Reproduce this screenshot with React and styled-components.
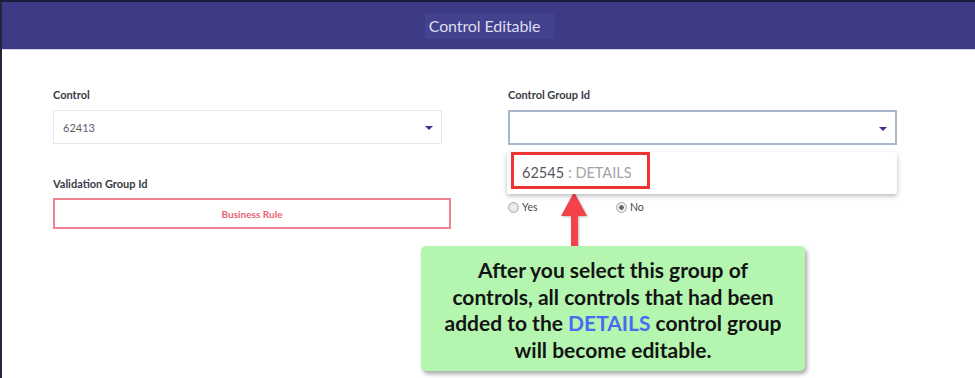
import React from 'react';
import styled, { createGlobalStyle } from 'styled-components';

const GlobalStyle = createGlobalStyle`
  html, body {
    margin: 0;
    padding: 0;
    background: #fff;
  }
  body {
    font-family: Lato, "Open Sans", sans-serif;
  }
`;

// Styles
const Frame = styled.div`
  position: relative;
  width: 975px;
  height: 378px;
  box-sizing: border-box;
  border-left: 2px solid #26263a;
  border-top: 2px solid #1c1b3b;
  overflow: hidden;
  background: #fff;
`;

const Header = styled.header`
  height: 47px;
  background: #3d3b86;
  border-bottom: 1px solid #d4d6e2;
  display: flex;
  align-items: center;
  justify-content: center;
`;

const Title = styled.h1`
  margin: 0 0 0 2px;
  padding: 3px 14px 4px 4px;
  background: #43428f;
  color: #dedced;
  font-family: Lato, sans-serif;
  font-size: 16px;
  font-weight: 400;
  letter-spacing: -0.1px;
`;

const Form = styled.div`
  display: grid;
  grid-template-columns: 398px 389px;
  column-gap: 57px;
  padding: 38px 0 0 51px;
`;

const Column = styled.div`
  display: flex;
  flex-direction: column;
  position: relative;
`;

const Label = styled.label`
  font-size: 11px;
  font-weight: 700;
  color: #3a3a44;
  margin-top: ${(props) => props.top || 0}px;
  margin-bottom: ${(props) => props.gap || 9}px;
  line-height: 13px;
`;

const Select = styled.div`
  width: ${(props) => props.width || '100%'};
  height: ${(props) => (props.focused ? 35 : 34)}px;
  box-sizing: border-box;
  border: ${(props) => (props.focused ? '2px solid #a9b7cc' : '1px solid #e6e6ef')};
  display: flex;
  align-items: center;
  justify-content: space-between;
  padding: 0 8px 0 9px;
  font-size: 11px;
  color: #5c5c66;
`;

const Caret = styled.span`
  width: 0;
  height: 0;
  border-left: 4px solid transparent;
  border-right: 4px solid transparent;
  border-top: 4px solid #4a2a8c;
  margin-top: 2px;
`;

const RuleBox = styled.div`
  height: 31px;
  box-sizing: border-box;
  border: 2px solid #f0828f;
  display: flex;
  align-items: center;
  justify-content: center;
  color: #ea5f74;
  font-size: 10px;
  font-weight: 700;
`;

const Menu = styled.div`
  position: absolute;
  top: 64px;
  left: -1px;
  width: 390px;
  height: 42px;
  background: #fff;
  box-shadow: 0 2px 5px rgba(0, 0, 0, 0.28);
  border-radius: 2px;
  z-index: 2;
`;

const Highlight = styled.div`
  position: absolute;
  top: 0;
  left: 4px;
  width: 139px;
  height: 37px;
  box-sizing: border-box;
  border: 3px solid #ee3333;
  display: flex;
  align-items: center;
  padding-left: 8px;
  padding-top: 4px;
  font-size: 14.5px;
  color: #55555c;
`;

const Muted = styled.span`
  color: #a3a3aa;
  margin-left: 4px;
`;

const RadioRow = styled.div`
  display: flex;
  margin-top: 56px;
  font-size: 10.5px;
  color: #4a4a52;
`;

const Radio = styled.span`
  display: flex;
  align-items: center;
  gap: 3px;
  width: ${(props) => props.width}px;
`;

const Dot = styled.span`
  width: 9px;
  height: 9px;
  border-radius: 50%;
  border: 1px solid #a8a8a8;
  background: radial-gradient(circle, ${(props) => (props.checked ? '#666 0 2px, #eee 2.5px' : '#f2f2f2 0, #e4e4e4 4px')});
`;

const Arrow = styled.svg`
  position: absolute;
  left: 556px;
  top: 188px;
  filter: drop-shadow(1px 1px 1px rgba(0, 0, 0, 0.25));
`;

const Callout = styled.div`
  position: absolute;
  left: 419px;
  top: 244px;
  width: 384px;
  height: 125px;
  box-sizing: border-box;
  background: #b4f6b0;
  border-radius: 5px;
  box-shadow: 2px 3px 4px rgba(0, 0, 0, 0.35);
  display: flex;
  align-items: center;
  justify-content: center;
  padding: 3px 10px 0;
`;

const CalloutText = styled.p`
  margin: 0;
  text-align: center;
  font-family: Lato, "Open Sans", sans-serif;
  font-size: 21px;
  font-weight: 700;
  line-height: 26.5px;
  color: #141414;
  white-space: nowrap;
`;

const Blue = styled.span`
  color: #4b6af2;
`;

const App = () => (
  <>
    <GlobalStyle />
    <Frame>
      <Header>
        <Title>Control Editable</Title>
      </Header>
      <Form>
        <Column>
          <Label>Control</Label>
          <Select width="389px">
            62413
            <Caret />
          </Select>
          <Label gap={8} top={33}>Validation Group Id</Label>
          <RuleBox>Business Rule</RuleBox>
        </Column>
        <Column>
          <Label gap={9}>Control Group Id</Label>
          <Select focused>
            <span />
            <Caret />
          </Select>
          <Menu>
            <Highlight>
              62545<Muted>: DETAILS</Muted>
            </Highlight>
          </Menu>
          <RadioRow>
            <Radio width={108}>
              <Dot />
              Yes
            </Radio>
            <Radio>
              <Dot checked />
              No
            </Radio>
          </RadioRow>
        </Column>
      </Form>
      <Arrow width="34" height="64" viewBox="0 0 34 64">
        <polygon points="16,2 3,26 29,26" fill="#f2434b" />
        <rect x="13" y="25" width="7" height="39" fill="#f2434b" />
      </Arrow>
      <Callout>
        <CalloutText>
          After you select this group of
          <br />
          controls, all controls that had been
          <br />
          added to the <Blue>DETAILS</Blue> control group
          <br />
          will become editable.
        </CalloutText>
      </Callout>
    </Frame>
  </>
);

export default App;
